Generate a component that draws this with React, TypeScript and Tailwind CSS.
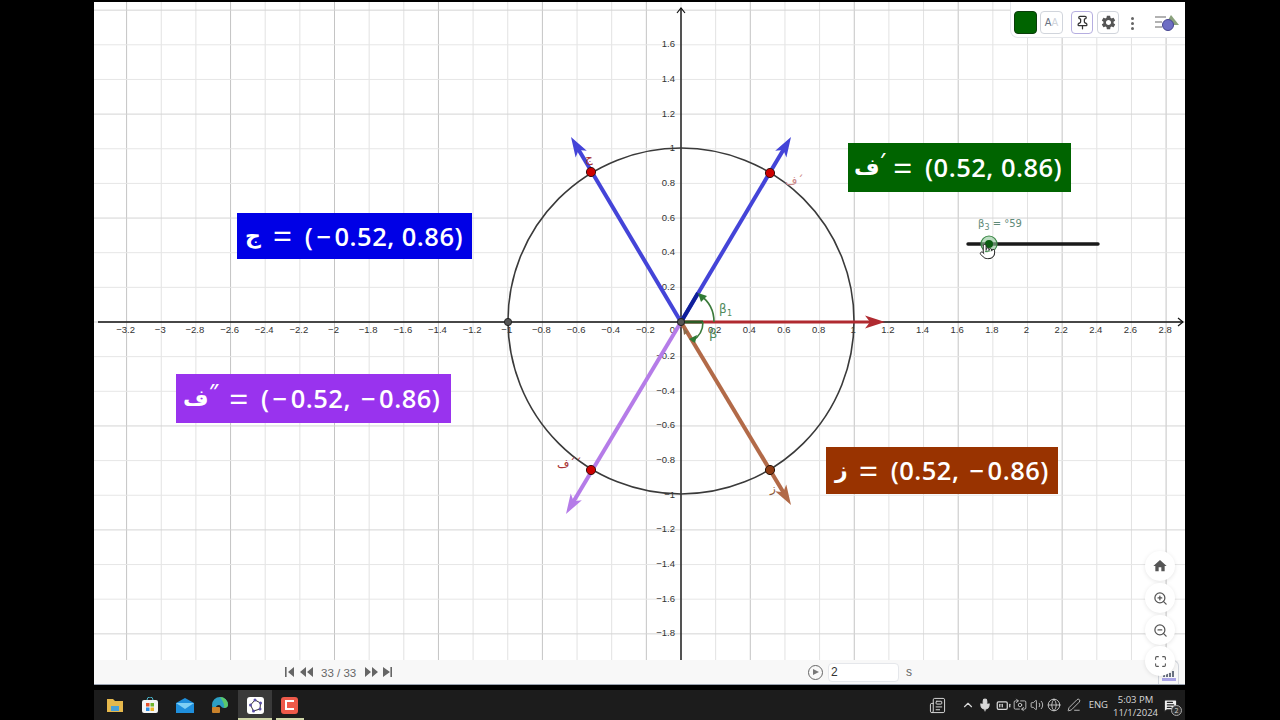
import { Maximize, Mic, Pin, Pointer, Volume2, ZoomIn, ZoomOut, ChevronUp, Globe, PenLine, SwitchCamera, BatteryMedium, MessageSquareText, Newspaper } from 'lucide-react';
import { MdHome, MdSettings } from 'react-icons/md';

const OX = 681;
const OY = 322;
const STEP = 34.65;

const fmt = (n: number) => {
    const v = Math.round(n * 10) / 10;
    return (v < 0 ? '\u2212' : '') + Math.abs(v).toString();
};

const range = (from: number, to: number) => {
    const out: number[] = [];
    for (let i = from; i <= to; i++) out.push(i);
    return out;
};

const xTicks = range(-16, 14).filter((i) => i !== 0);
const yTicks = range(-9, 8).filter((i) => i !== 0);

interface Vec {
    x: number;
    y: number;
    color: string;
    width: number;
}

const vectors: Vec[] = [
    { x: 885, y: 322, color: '#b02a30', width: 3 },
    { x: 791, y: 137, color: '#4444d8', width: 4 },
    { x: 571, y: 137, color: '#4444d8', width: 4 },
    { x: 566, y: 514, color: '#b57ce8', width: 4 },
    { x: 791, y: 505, color: '#b26a48', width: 4 },
];

function Vector({ x, y, color, width }: Vec) {
    const dx = x - OX;
    const dy = y - OY;
    const len = Math.hypot(dx, dy);
    const ux = dx / len;
    const uy = dy / len;
    const bx = x - ux * 18;
    const by = y - uy * 18;
    const wing = 6.5;
    return (
        <g>
            <line x1={OX} y1={OY} x2={bx + ux * 4} y2={by + uy * 4} stroke={color} strokeWidth={width} />
            <polygon
                fill={color}
                points={`${x},${y} ${bx - uy * wing - ux * 2},${by + ux * wing - uy * 2} ${bx + ux * 3},${by + uy * 3} ${bx + uy * wing - ux * 2},${by - ux * wing - uy * 2}`}
            />
        </g>
    );
}

function Board() {
    return (
        <svg viewBox="94 2 1091 658" className="absolute inset-0 w-full h-full">
            {range(-17, 14).map((i) => {
                const x = OX + i * STEP;
                return <line key={i} x1={x} y1={2} x2={x} y2={660} stroke={(i + 1) % 3 === 0 ? '#c4c4c4' : '#e2e2e2'} />;
            })}
            {range(-10, 10).map((i) => {
                const y = OY + i * STEP;
                return <line key={i} x1={94} y1={y} x2={1185} y2={y} stroke={i % 3 === 0 ? '#d4d4d4' : '#e6e6e6'} />;
            })}

            <line x1={98} y1={322} x2={1183} y2={322} stroke="#111" strokeWidth={1.4} />
            <line x1={681} y1={8} x2={681} y2={660} stroke="#111" strokeWidth={1.4} />
            <path d="M1178 318 L1183 322 L1178 326" fill="none" stroke="#111" strokeWidth={1.2} />
            <path d="M677 13 L681 8 L685 13" fill="none" stroke="#111" strokeWidth={1.2} />

            <g fontFamily="'Liberation Sans', sans-serif" fontSize={9.5} fill="#333">
                {xTicks.map((i) => (
                    <text key={i} x={OX + i * STEP - 1} y={333} textAnchor="middle">
                        {fmt(i * 0.2)}
                    </text>
                ))}
                {yTicks.map((i) => (
                    <text key={i} x={675} y={OY - i * STEP + 2.5} textAnchor="end">
                        {fmt(i * 0.2)}
                    </text>
                ))}
                <text x={675} y={333} textAnchor="end">0</text>
            </g>

            <circle cx={681} cy={321} r={173} fill="none" stroke="#3a3a3a" strokeWidth={1.6} />

            {vectors.map((v) => (
                <Vector key={v.x + '-' + v.y} {...v} />
            ))}

            <line x1={681} y1={322} x2={698} y2={293} stroke="#10209a" strokeWidth={4} />
            <line x1={681} y1={322} x2={703} y2={322} stroke="#2a5a24" strokeWidth={3} />
            <path d="M714 322 A33 33 0 0 0 700 295" fill="none" stroke="#3b7a3b" strokeWidth={1.6} />
            <polygon points="698,293 707,296 701,302" fill="#2f7a35" />
            <path d="M703 322 A22 22 0 0 1 692 341" fill="none" stroke="#3b7a3b" strokeWidth={1.6} />
            <polygon points="689,339 697,335 695,343" fill="#2f7a35" />
            <polygon points="683,328 688,332 684,335" fill="#8a6a4a" />

            <g fill="#4f8a5b" fontFamily="'DejaVu Sans', sans-serif">
                <text x={719} y={313} fontSize={12}>β</text>
                <text x={727} y={316} fontSize={8}>1</text>
                <text x={709} y={338} fontSize={13}>β</text>
            </g>

            <g fontFamily="'DejaVu Sans', sans-serif" fontSize={12}>
                <text x={585} y={162} fill="#a33">ج</text>
                <text x={785} y={185} fill="#c88">ف´</text>
                <text x={557} y={468} fill="#a33">ف´´</text>
                <text x={770} y={492} fill="#8a5a3a">ز</text>
            </g>

            <circle cx={770} cy={173} r={4.6} fill="#c00" stroke="#3a1010" strokeWidth={1} />
            <circle cx={591} cy={172} r={4.6} fill="#c00" stroke="#3a1010" strokeWidth={1} />
            <circle cx={591} cy={470} r={4.6} fill="#c00" stroke="#3a1010" strokeWidth={1} />
            <circle cx={770} cy={470} r={4.6} fill="#8c3a12" stroke="#2a1408" strokeWidth={1} />
            <circle cx={681} cy={322} r={3.6} fill="#555" stroke="#222" />
            <circle cx={508} cy={322} r={3.6} fill="#555" stroke="#222" />

            <g>
                <text x={978} y={227} fontSize={10} fill="#5f8a78" fontFamily="'DejaVu Sans', sans-serif">
                    β<tspan fontSize={8} dy={3}>3</tspan>
                    <tspan dy={-3}> = °59</tspan>
                </text>
                <line x1={968} y1={244} x2={1098} y2={244} stroke="#1a1a1a" strokeWidth={3.4} strokeLinecap="round" />
                <circle cx={989} cy={244} r={8} fill="#8fc79a" fillOpacity={0.6} stroke="#3f8a4a" strokeWidth={1.2} />
                <circle cx={989} cy={244} r={4} fill="#0b5e12" />
            </g>
        </svg>
    );
}

function Formula({ letter, prime, value, className, gap }: { letter: string; prime?: string; value: string; className: string; gap: string }) {
    const [head, ...rest] = value.split('−');
    return (
        <div className={`absolute flex items-center text-white font-['Open_Sans',sans-serif] font-semibold text-[25.5px] tracking-[0.5px] whitespace-pre ${className}`}>
            <span className="font-['DejaVu_Sans',sans-serif] font-bold text-[22px] leading-none">{letter}</span>
            {prime && <span className="italic text-[20px] leading-none -mt-[16px]">{prime}</span>}
            <span className={`${gap} mr-[12px] text-[34px] font-normal leading-none`}>=</span>
            <span>
                {head}
                {rest.map((part, i) => (
                    <span key={i}>
                        <span className="mx-[3px]">−</span>
                        {part}
                    </span>
                ))}
            </span>
        </div>
    );
}

function TopBar() {
    return (
        <div className="absolute top-0 right-0 w-[175px] h-[36px] bg-white rounded-bl-lg border-l border-b border-gray-200 flex items-start pt-[9px] pl-[3px]">
            <div className="w-[23px] h-[23px] rounded bg-[#006400] border border-[#0b3d0b] ring-1 ring-white" />
            <div className="ml-[3px] w-[23px] h-[23px] rounded border border-gray-300 flex items-center justify-center text-[10px] font-['Liberation_Sans',sans-serif] text-gray-500">
                A<span className="text-gray-300">A</span>
            </div>
            <div className="ml-[8px] w-[22px] h-[23px] rounded border border-[#b5aee0] flex items-center justify-center">
                <Pin size={15} strokeWidth={2} className="text-[#333]" />
            </div>
            <div className="ml-[4px] w-[22px] h-[23px] rounded border border-gray-300 flex items-center justify-center text-[#555]">
                <MdSettings size={17} />
            </div>
            <div className="ml-[12px] mt-[6px] flex flex-col gap-[2px]">
                <div className="w-[3px] h-[3px] rounded-full bg-[#666]" />
                <div className="w-[3px] h-[3px] rounded-full bg-[#666]" />
                <div className="w-[3px] h-[3px] rounded-full bg-[#666]" />
            </div>
            <svg width="24" height="16" viewBox="0 0 24 16" className="ml-[21px] mt-[4px]">
                <path d="M0 2h11M0 7h7M0 12h7" stroke="#999" strokeWidth={1.6} />
                <polygon points="16,0 24,10 10,10" fill="#8aa17c" />
                <circle cx="13" cy="10" r="5.5" fill="#6e6ec4" stroke="#45458f" />
            </svg>
        </div>
    );
}

function RoundButton({ children, className }: { children: React.ReactNode; className: string }) {
    return (
        <div className={`absolute z-10 w-[30px] h-[30px] rounded-full bg-white shadow-[0_1px_4px_rgba(0,0,0,0.1)] flex items-center justify-center text-[#555] ${className}`}>
            {children}
        </div>
    );
}

function Controls() {
    return (
        <div className="h-[25px] bg-[#f8f8f8] border-b border-gray-400 relative flex items-center shrink-0 text-[#666] font-['Liberation_Sans',sans-serif]">
            <svg width="110" height="12" viewBox="0 0 110 12" className="ml-[191px]" fill="#666">
                <path d="M0 1h1.6v10H0zM9 1v10L3 6zM21 1v10l-6-5zM28 1v10l-6-5z" />
                <path d="M80 1v10l6-5zM87 1v10l6-5zM98 1v10l7-5zM105.4 1h1.6v10h-1.6z" />
            </svg>
            <span className="absolute left-[227px] top-[5px] text-[11.5px]">33 / 33</span>
            <div className="ml-[413px] w-[15px] h-[15px] rounded-full border-[1.5px] border-[#666] flex items-center justify-center">
                <div className="w-0 h-0 border-y-[3.5px] border-y-transparent border-l-[6px] border-l-[#777] ml-[1px]" />
            </div>
            <div className="ml-[5px] w-[71px] h-[19px] bg-white rounded border border-gray-200 pl-[2px] text-[12px] text-[#333] leading-[17px]">2</div>
            <span className="ml-[7px] text-[12px]">s</span>
            <div className="absolute right-[6px] bottom-0 w-[21px] h-[24px] rounded-t-md border border-b-0 border-gray-300 flex flex-col justify-end items-center pb-[3px] gap-[1px]">
                <div className="flex items-end gap-[1px]">
                    <div className="w-[2px] h-[3px] bg-gray-500" />
                    <div className="w-[2px] h-[5px] bg-gray-500" />
                    <div className="w-[2px] h-[4px] bg-gray-500" />
                    <div className="w-[2px] h-[6px] bg-gray-500" />
                </div>
                <div className="w-[14px] h-[3px] bg-[#a9a4e6]" />
            </div>
        </div>
    );
}

function TaskIcons() {
    return (
        <div className="flex items-center h-full pl-[3px]">
            <div className="w-[35px] flex justify-center">
                <svg width="16" height="14" viewBox="0 0 16 14">
                    <path d="M0 1h6l2 2h8v11H0z" fill="#e6b84c" />
                    <rect x="4" y="8" width="8" height="5" fill="#4aa0d8" />
                </svg>
            </div>
            <div className="w-[35px] flex justify-center">
                <svg width="16" height="16" viewBox="0 0 16 16">
                    <path d="M5 3a3 3 0 0 1 6 0" fill="none" stroke="#49b3c9" />
                    <rect y="3" width="16" height="13" rx="2" fill="#f4f4f4" />
                    <rect x="4" y="6" width="3.5" height="3.5" fill="#e5502b" />
                    <rect x="8.5" y="6" width="3.5" height="3.5" fill="#6fb52c" />
                    <rect x="4" y="10.5" width="3.5" height="3.5" fill="#2b8fe5" />
                    <rect x="8.5" y="10.5" width="3.5" height="3.5" fill="#f0b429" />
                </svg>
            </div>
            <div className="w-[35px] flex justify-center">
                <svg width="18" height="15" viewBox="0 0 18 15">
                    <path d="M0 5 9 0l9 5v10H0z" fill="#1f8fdc" />
                    <path d="M0 5l9 6 9-6" fill="#7fd0f5" />
                </svg>
            </div>
            <div className="w-[36px] flex justify-center">
                <svg width="18" height="18" viewBox="0 0 18 18">
                    <path d="M1 9a8 8 0 0 1 16 0c0 2-2 3-4 3-3 0-3-3-5-3-3 0-4 3-3 6C2 14 1 11 1 9z" fill="#2c9fc4" />
                    <path d="M9 1a8 8 0 0 1 8 8c0 2-2 3-4 3 1-4-2-8-4-11z" fill="#5bc96a" />
                    <rect x="1" y="11" width="8" height="6" rx="1" fill="#c9822b" />
                </svg>
            </div>
            <div className="w-[34px] h-full bg-[#3a3a3a] flex items-center justify-center relative">
                <div className="w-[17px] h-[17px] bg-white rounded-[3px] flex items-center justify-center">
                    <svg width="15" height="15" viewBox="0 0 15 15">
                        <polygon points="7,2 12.5,5 12,11 5.5,13 2.5,7" fill="none" stroke="#333" />
                        <g fill="#5a50a8">
                            <circle cx="7" cy="2" r="1.5" />
                            <circle cx="12.5" cy="5" r="1.5" />
                            <circle cx="12" cy="11" r="1.5" />
                            <circle cx="5.5" cy="13" r="1.5" />
                            <circle cx="2.5" cy="7" r="1.5" />
                        </g>
                    </svg>
                </div>
                <div className="absolute bottom-0 left-0 right-0 h-[2px] bg-[#cfd6a8]" />
            </div>
            <div className="w-[35px] h-full flex items-center justify-center relative">
                <div className="w-[17px] h-[17px] bg-[#ee5a4a] rounded-[3px] flex items-center justify-center">
                    <div className="w-[9px] h-[10px] border-[2.5px] border-r-0 border-white" />
                </div>
                <div className="absolute bottom-0 left-[4px] right-[3px] h-[2px] bg-[#cfd6a8]" />
            </div>
        </div>
    );
}

function Tray() {
    return (
        <div className="ml-auto flex items-center h-full text-[#d8d8d8] font-['Open_Sans',sans-serif]">
            <Newspaper size={17} strokeWidth={1.4} />
            <ChevronUp size={14} className="ml-[15px]" />
            <Mic size={14} strokeWidth={2} fill="#d8d8d8" className="ml-[3px]" />
            <BatteryMedium size={15} className="ml-[4px]" />
            <SwitchCamera size={14} strokeWidth={1.4} className="ml-[2px]" />
            <Volume2 size={14} strokeWidth={1.4} className="ml-[3px]" />
            <Globe size={14} strokeWidth={1.4} className="ml-[3px]" />
            <PenLine size={14} strokeWidth={1.4} className="ml-[6px]" />
            <span className="ml-[8px] text-[9.5px]">ENG</span>
            <div className="ml-[5px] mt-[2px] flex flex-col items-center text-[9.5px] leading-[13px]">
                <span>5:03 PM</span>
                <span>11/1/2024</span>
            </div>
            <div className="ml-[5px] mr-[7px] relative">
                <MessageSquareText size={15} fill="#eee" className="text-[#222]" />
                <span className="absolute -right-[4px] -bottom-[3px] w-[11px] h-[11px] rounded-full bg-[#333] border border-[#aaa] text-[7px] leading-[9px] text-center">2</span>
            </div>
        </div>
    );
}

export default function App() {
    return (
        <div className="h-screen w-screen bg-black overflow-hidden pl-[94px] pr-[95px] pt-[2px] flex flex-col">
            <div className="relative h-[658px] shrink-0 bg-white">
                <Board />
                <Formula letter="ف" prime="′" value="(0.52, 0.86)" gap="ml-[8px]" className="left-[754px] top-[141px] w-[223px] h-[49px] bg-[#006400] pl-[6px]" />
                <Formula letter="ج" value="(−0.52, 0.86)" gap="ml-[12px]" className="left-[143px] top-[211px] w-[235px] h-[46px] bg-[#0000e6] pl-[8px]" />
                <Formula letter="ف" prime="″" value="(−0.52, −0.86)" gap="ml-[11px]" className="left-[82px] top-[372px] w-[275px] h-[49px] bg-[#9933ee] pl-[7px]" />
                <Formula letter="ز" value="(0.52, −0.86)" gap="ml-[11px]" className="left-[732px] top-[445px] w-[232px] h-[47px] bg-[#993300] pl-[9px]" />
                <TopBar />
                <Pointer size={17} fill="#fff" strokeWidth={1.4} className="absolute left-[885px] top-[241px] text-[#222]" />
                <RoundButton className="left-[1051px] top-[549px]">
                    <MdHome size={16} />
                </RoundButton>
                <RoundButton className="left-[1051px] top-[581px]">
                    <ZoomIn size={15} />
                </RoundButton>
                <RoundButton className="left-[1051px] top-[613px]">
                    <ZoomOut size={15} />
                </RoundButton>
                <RoundButton className="left-[1051px] top-[644px]">
                    <Maximize size={13} />
                </RoundButton>
            </div>
            <Controls />
            <div className="h-[5px] shrink-0" />
            <div className="h-[30px] shrink-0 bg-[#1c1c1c] flex items-center">
                <TaskIcons />
                <Tray />
            </div>
        </div>
    );
}
